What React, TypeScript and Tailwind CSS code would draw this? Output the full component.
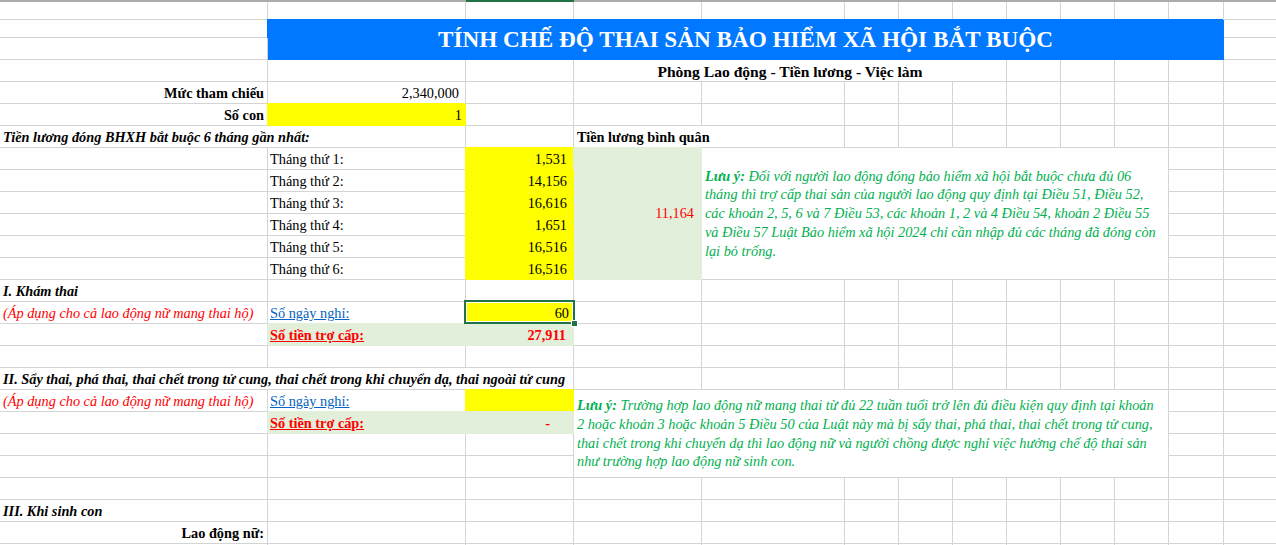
import React from "react";

const GL = "border-r border-b border-[#d4d4d4]";
const TXT = "flex items-end pb-[1px] leading-[17px] whitespace-nowrap";
const YEL = "border-r border-b border-[#ffff00] bg-[#ffff00] shadow-[-1px_-1px_0_#ffff00]";
const GRN = "border-r border-b border-[#e2efda] bg-[#e2efda] shadow-[-1px_-1px_0_#e2efda]";

function Empty({ n }: { n: number }) {
  return (
    <>
      {Array.from({ length: n }).map((_, i) => (
        <div key={i} className={GL} />
      ))}
    </>
  );
}

function Month({ n, v }: { n: number; v: string }) {
  return (
    <>
      <div className={`${GL} ${TXT} pl-[2px]`}>Tháng thứ {n}:</div>
      <div className={`${YEL} ${TXT} justify-end pr-[6px]`}>{v}</div>
    </>
  );
}

export default function App() {
  return (
    <div className="w-[1276px] h-[545px] overflow-hidden bg-white font-['Liberation_Serif',serif] text-[14.3px] text-black">
      <div className="flex h-[2px]">
        <div className="w-[466px] bg-[#ababab]" />
        <div className="w-[108px] bg-[#217346]" />
        <div className="flex-1 bg-[#ababab]" />
      </div>
      <div className="grid grid-cols-[268px_198px_108px_128px_143px_54px_54px_54px_54px_54px_54px_55px_80px] grid-rows-[18px_18px_22px_repeat(23,22px)]">
        {/* R1 */}
        <Empty n={13} />
        {/* R2 */}
        <div className={GL} />
        <div className="col-span-11 row-span-2 bg-[#0078ff] border-r border-b border-[#0078ff] shadow-[-1px_-1px_0_#0078ff] flex items-center justify-center text-white font-bold text-[23.2px] whitespace-nowrap">
          TÍNH CHẾ ĐỘ THAI SẢN BẢO HIỂM XÃ HỘI BẮT BUỘC
        </div>
        <div className={GL} />
        {/* R3 */}
        <div className={GL} />
        <div className={GL} />
        {/* R4 */}
        <Empty n={3} />
        <div className={`${GL} col-span-5 ${TXT} justify-center font-bold text-[15.6px]`}>
          Phòng Lao động - Tiền lương - Việc làm
        </div>
        <Empty n={5} />
        {/* R5 */}
        <div className={`${GL} ${TXT} justify-end pr-[3px] font-bold`}>Mức tham chiếu</div>
        <div className={`${GL} ${TXT} justify-end pr-[6px]`}>2,340,000</div>
        <Empty n={11} />
        {/* R6 */}
        <div className={`${GL} ${TXT} justify-end pr-[3px] font-bold`}>Số con</div>
        <div className={`${YEL} ${TXT} justify-end pr-[3px]`}>1</div>
        <Empty n={11} />
        {/* R7 */}
        <div className={`${GL} col-span-2 ${TXT} pl-[3px] font-bold italic`}>
          Tiền lương đóng BHXH bắt buộc 6 tháng gần nhất:
        </div>
        <div className={GL} />
        <div className={`${GL} col-span-2 ${TXT} pl-[3px] font-bold`}>Tiền lương bình quân</div>
        <Empty n={8} />
        {/* R8 */}
        <div className={GL} />
        <Month n={1} v="1,531" />
        <div className={`row-span-6 ${GRN} flex items-center justify-end pr-[7px] text-[#ff0000]`}>11,164</div>
        <div className={`${GL} col-span-7 row-span-6 flex items-center pl-[3px] italic text-[#00b050] leading-[18.75px] whitespace-nowrap`}>
          <div>
            <span className="font-bold">Lưu ý:</span> Đối với người lao động đóng bảo hiểm xã hội bắt buộc chưa đủ 06
            <br />
            tháng thì trợ cấp thai sản của người lao động quy định tại Điều 51, Điều 52,
            <br />
            các khoản 2, 5, 6 và 7 Điều 53, các khoản 1, 2 và 4 Điều 54, khoản 2 Điều 55
            <br />
            và Điều 57 Luật Bảo hiểm xã hội 2024 chỉ cần nhập đủ các tháng đã đóng còn
            <br />
            lại bỏ trống.
          </div>
        </div>
        <Empty n={2} />
        {/* R9-R13 */}
        <div className={GL} />
        <Month n={2} v="14,156" />
        <Empty n={2} />
        <div className={GL} />
        <Month n={3} v="16,616" />
        <Empty n={2} />
        <div className={GL} />
        <Month n={4} v="1,651" />
        <Empty n={2} />
        <div className={GL} />
        <Month n={5} v="16,516" />
        <Empty n={2} />
        <div className={GL} />
        <Month n={6} v="16,516" />
        <Empty n={2} />
        {/* R14 */}
        <div className={`${GL} ${TXT} pl-[3px] font-bold italic`}>I. Khám thai</div>
        <Empty n={12} />
        {/* R15 */}
        <div className={`${GL} ${TXT} pl-[3px] italic text-[#ff0000]`}>(Áp dụng cho cả lao động nữ mang thai hộ)</div>
        <div className={`${GL} ${TXT} pl-[2px] text-[#0563c1] underline`}>Số ngày nghỉ:</div>
        <div className={`${YEL} ${TXT} justify-end pr-[4px] relative`}>
          60
          <div className="absolute left-[-2px] top-[-2px] w-[111px] h-[24px] border-2 border-[#217346] shadow-[inset_0_0_0_1px_#ffffff]">
            <div className="absolute right-[-5px] bottom-[-5px] w-[7px] h-[7px] bg-[#217346] border border-white" />
          </div>
        </div>
        <Empty n={10} />
        {/* R16 */}
        <div className={GL} />
        <div className={`col-span-2 ${GRN} ${TXT} justify-between pl-[2px] pr-[7px] font-bold text-[#ff0000]`}>
          <span className="underline">Số tiền trợ cấp:</span>
          <span>27,911</span>
        </div>
        <Empty n={10} />
        {/* R17 */}
        <Empty n={13} />
        {/* R18 */}
        <div className={`${GL} col-span-3 ${TXT} pl-[3px] font-bold italic`}>
          II. Sẩy thai, phá thai, thai chết trong tử cung, thai chết trong khi chuyển dạ, thai ngoài tử cung
        </div>
        <Empty n={10} />
        {/* R19 */}
        <div className={`${GL} ${TXT} pl-[3px] italic text-[#ff0000]`}>(Áp dụng cho cả lao động nữ mang thai hộ)</div>
        <div className={`${GL} ${TXT} pl-[2px] text-[#0563c1] underline`}>Số ngày nghỉ:</div>
        <div className={YEL} />
        <div className={`${GL} col-span-8 row-span-4 flex items-center pl-[3px] italic text-[#00b050] leading-[18.75px] whitespace-nowrap`}>
          <div>
            <span className="font-bold">Lưu ý:</span>
            {"  "}Trường hợp lao động nữ mang thai từ đủ 22 tuần tuổi trở lên đủ điều kiện quy định tại khoản
            <br />
            2 hoặc khoản 3 hoặc khoản 5 Điều 50 của Luật này mà bị sẩy thai, phá thai, thai chết trong tử cung,
            <br />
            thai chết trong khi chuyển dạ thì lao động nữ và người chồng được nghỉ việc hưởng chế độ thai sản
            <br />
            như trường hợp lao động nữ sinh con.
          </div>
        </div>
        <Empty n={2} />
        {/* R20 */}
        <div className={GL} />
        <div className={`col-span-2 ${GRN} ${TXT} justify-between pl-[2px] pr-[23px] font-bold text-[#ff0000]`}>
          <span className="underline">Số tiền trợ cấp:</span>
          <span>-</span>
        </div>
        <Empty n={2} />
        {/* R21 */}
        <Empty n={5} />
        {/* R22 */}
        <Empty n={5} />
        {/* R23 */}
        <Empty n={13} />
        {/* R24 */}
        <div className={`${GL} ${TXT} pl-[3px] font-bold italic`}>III. Khi sinh con</div>
        <Empty n={12} />
        {/* R25 */}
        <div className={`${GL} ${TXT} justify-end pr-[3px] font-bold`}>Lao động nữ:</div>
        <Empty n={12} />
        {/* R26 */}
        <Empty n={13} />
      </div>
    </div>
  );
}
